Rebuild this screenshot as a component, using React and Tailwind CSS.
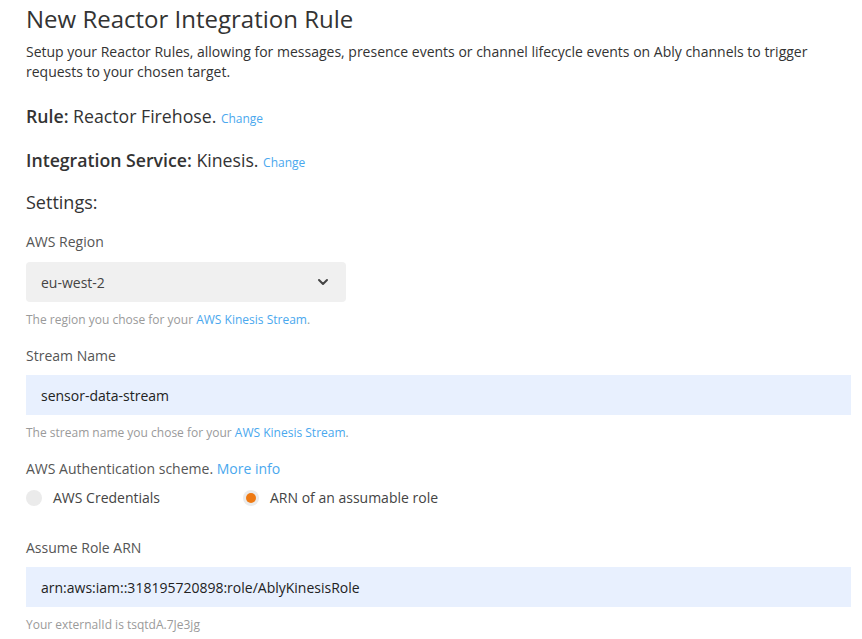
import { ChevronDown } from 'lucide-react';

function Helper({ children }) {
    return <p className="mt-[10px] text-[12px] leading-[16px] text-[#9a9a9a]">{children}</p>;
}

function Label({ children }) {
    return <p className="text-[14px] leading-[20px] text-[#555]">{children}</p>;
}

export default function App() {
    return (
        <div className="min-h-screen bg-white pl-[26px] pr-[11px] pt-[4px] text-[#333]" style={{ fontFamily: '"Open Sans", sans-serif' }}>
            <h1 className="text-[24px] leading-[30px] text-[#333]">New Reactor Integration Rule</h1>
            <p className="mt-[8px] text-[14px] leading-[20px] text-[#333]">
                Setup your Reactor Rules, allowing for messages, presence events or channel lifecycle events on Ably channels to trigger requests to your chosen target.
            </p>

            <p className="mt-[22px] text-[17.7px] leading-[24px]">
                <span className="font-semibold">Rule:</span> Reactor Firehose.{' '}
                <a className="text-[12px] text-[#4aa8ee]">Change</a>
            </p>
            <p className="mt-[17px] text-[17.7px] leading-[24px]">
                <span className="font-semibold">Integration Service:</span> Kinesis.{' '}
                <a className="text-[12px] text-[#4aa8ee]">Change</a>
            </p>
            <h2 className="mt-[15px] text-[18px] leading-[24px]">Settings:</h2>

            <div className="mt-[18px]">
                <Label>AWS Region</Label>
                <div className="mt-[10px] flex h-[40px] w-[320px] items-center justify-between rounded-[4px] bg-[#f0f0f0] px-[15px] text-[14px] text-[#444]">
                    <span>eu-west-2</span>
                    <ChevronDown size={16} strokeWidth={3} className="text-[#444]" />
                </div>
                <Helper>
                    The region you chose for your <a className="text-[#4aa8ee]">AWS Kinesis Stream</a>.
                </Helper>
            </div>

            <div className="mt-[18px]">
                <Label>Stream Name</Label>
                <div className="mt-[9px] flex h-[40px] items-center bg-[#e8f0fe] px-[15px] text-[14px] text-[#222]">
                    sensor-data-stream
                </div>
                <Helper>
                    The stream name you chose for your <a className="text-[#4aa8ee]">AWS Kinesis Stream</a>.
                </Helper>
            </div>

            <div className="mt-[18px]">
                <p className="text-[14px] leading-[20px] text-[#555]">
                    AWS Authentication scheme. <a className="text-[#4aa8ee]">More info</a>
                </p>
                <div className="mt-[9px] flex items-center text-[14px] leading-[20px] text-[#444]">
                    <div className="flex w-[217px] items-center gap-[11px]">
                        <span className="h-[16px] w-[16px] rounded-full bg-[#ebebeb]"></span>
                        <span>AWS Credentials</span>
                    </div>
                    <div className="flex items-center gap-[11px]">
                        <span className="flex h-[16px] w-[16px] items-center justify-center rounded-full bg-[#ebebeb]">
                            <span className="h-[10px] w-[10px] rounded-full bg-[#ee7a14]"></span>
                        </span>
                        <span>ARN of an assumable role</span>
                    </div>
                </div>
            </div>

            <div className="mt-[30px]">
                <Label>Assume Role ARN</Label>
                <div className="mt-[9px] flex h-[40px] items-center bg-[#e8f0fe] px-[15px] text-[14px] text-[#222]">
                    arn:aws:iam::318195720898:role/AblyKinesisRole
                </div>
                <Helper>Your externalId is tsqtdA.7Je3jg</Helper>
            </div>
        </div>
    );
}
